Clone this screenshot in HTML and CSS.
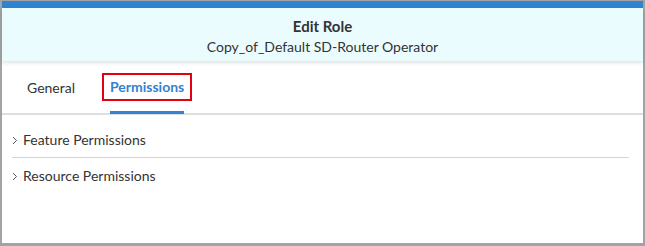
FILE: index.html
```html
<!DOCTYPE html>
<html>
<head>
<meta charset="utf-8">
<link rel="stylesheet" href="styles.css">
</head>
<body>
<div class="frame">
  <div class="topbar"></div>
  <header class="header">
    <div class="title">Edit Role</div>
    <div class="subtitle">Copy_of_Default SD-Router Operator</div>
  </header>
  <nav class="tabs">
    <div class="tab">General</div>
    <div class="tab active"><span class="label">Permissions</span></div>
  </nav>
  <div class="sections">
    <div class="row">
      <svg class="chev" width="6" height="9" viewBox="0 0 6 9"><path d="M1 1 L4.5 4.5 L1 8" fill="none" stroke="#555" stroke-width="1"/></svg>
      <span>Feature Permissions</span>
    </div>
    <div class="row">
      <svg class="chev" width="6" height="9" viewBox="0 0 6 9"><path d="M1 1 L4.5 4.5 L1 8" fill="none" stroke="#555" stroke-width="1"/></svg>
      <span>Resource Permissions</span>
    </div>
  </div>
</div>
</body>
</html>
```
FILE: styles.css
```css
* { box-sizing: border-box; }
html, body { margin: 0; padding: 0; background: #a3a3a3; }
body { width: 645px; height: 246px; overflow: hidden; font-family: Lato, "Open Sans", sans-serif; color: #333; }
.frame {
  margin: 1px 2px 0 2px;
  height: 242px;
  background: #fff;
  display: flex;
  flex-direction: column;
}
.topbar { height: 7px; background: #2f83d1; }
.header {
  background: #ebfcff;
  height: 53px;
  display: flex;
  flex-direction: column;
  align-items: center;
  padding-top: 9px;
  box-shadow: 0 2px 4px rgba(0,0,0,0.12);
  position: relative;
  z-index: 1;
}
.title { font-weight: 700; font-size: 15px; line-height: 18px; color: #333; }
.subtitle { font-size: 14px; line-height: 18px; margin-top: 3px; color: #333; }
.tabs {
  display: flex;
  height: 54px;
  border-bottom: 2px solid #dedede;
  padding-left: 25px;
  gap: 35px;
}
.tab {
  font-size: 14px;
  display: flex;
  align-items: center;
  color: #333;
  height: 100%;
  position: relative;
}
.tab.active {
  color: #2f83d1;
  font-weight: 700;
}
.tab.active .label {
  border: 2px solid #e3000f;
  padding: 3px 6px 4px 6px;
  margin-left: -8px;
  margin-right: -8px;
}
.tab.active::after {
  content: "";
  position: absolute;
  left: 0;
  right: 0;
  bottom: -1px;
  height: 3px;
  background: #2f83d1;
}
.sections { padding: 7px 14px 0 10px; }
.row {
  display: flex;
  align-items: center;
  height: 35px;
  font-size: 14px;
  color: #333;
  gap: 5px;
}
.row + .row { border-top: 1px solid #d3d3d3; }
.chev { margin-top: 2px; }
```
